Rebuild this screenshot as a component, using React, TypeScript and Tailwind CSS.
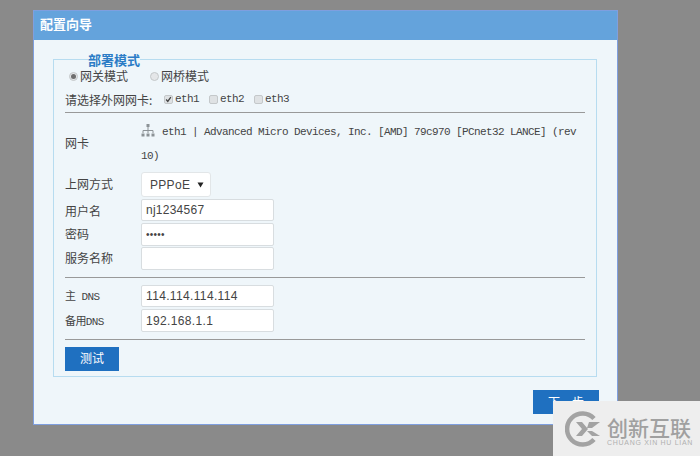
const mono = "font-['Liberation_Mono','Noto_Sans_CJK_SC',monospace] text-[11px] tracking-[-0.6px]";
const inputBase =
  "h-full w-[133px] rounded-[2px] border border-[#d8dde0] bg-white px-[4px] font-['Liberation_Sans',sans-serif] tracking-[0.25px] text-[#444444] outline-none";
const inputClass = `${inputBase} text-[12px]`;

function Radio({ checked }: { checked?: boolean }) {
  return (
    <span className="flex h-[9px] w-[9px] items-center justify-center rounded-full border border-[#c4c8ca] bg-[#e4e6e8]">
      {checked && <span className="h-[5px] w-[5px] rounded-full bg-[#6e6e6e]" />}
    </span>
  );
}

function Check({ label, checked }: { label: string; checked?: boolean }) {
  return (
    <label className="flex items-center gap-[2px]">
      <span className="flex h-[9px] w-[9px] items-center justify-center rounded-[2px] border border-[#c4c8ca] bg-[#dfe2e4]">
        {checked && (
          <svg viewBox="0 0 9 9" className="h-[9px] w-[9px]">
            <path d="M1.5 4.5 L3.6 7 L7.5 1.5" fill="none" stroke="#444444" strokeWidth="1.6" />
          </svg>
        )}
      </span>
      <span className={mono}>{label}</span>
    </label>
  );
}

function Row({ label, height, gap, children }: { label: React.ReactNode; height: string; gap: string; children: React.ReactNode }) {
  return (
    <div className={`flex items-stretch ${height} ${gap}`}>
      <div className="flex w-[76px] items-center">{label}</div>
      {children}
    </div>
  );
}

function NetIcon() {
  return (
    <svg viewBox="0 0 14 13" className="h-[13px] w-[14px]" fill="none">
      <rect x="5.5" y="0" width="3" height="3" fill="#8c9296" />
      <path d="M7 3V9M2 9V6.5H12V9" stroke="#8c9296" />
      <rect x="0.5" y="9.5" width="3" height="3" fill="#8c9296" />
      <rect x="5.5" y="9.5" width="3" height="3" fill="#8c9296" />
      <rect x="10.5" y="9.5" width="3" height="3" fill="#8c9296" />
    </svg>
  );
}

function Watermark() {
  return (
    <div className="absolute bottom-0 right-0 flex h-[55px] w-[147px] items-center gap-[6px] bg-[#eeeeee] pl-[12px]">
      <svg viewBox="0 0 36 36" className="h-[36px] w-[36px]" fill="none">
        <path d="M29 7.5 A15.5 15.5 0 1 0 29 28.5" stroke="#a3a3a3" strokeWidth="4.5" />
        <path d="M11 11 H17 L23 18 L17 25 H11 L17 18 Z" fill="#a3a3a3" />
        <path d="M24 11 H35 L27 17 H22 Z" fill="#a3a3a3" />
        <path d="M22 20 L27 20 L35 25 H27 Z" fill="#a3a3a3" />
      </svg>
      <div className="flex flex-col pt-[5px]">
        <span className="font-['Noto_Sans_CJK_SC',sans-serif] text-[21px] font-medium leading-[23px] text-[#a0a0a0]">创新互联</span>
        <span className="font-['Liberation_Sans',sans-serif] text-[7px] leading-[8px] tracking-[0.7px] text-[#b0b0b0]">CHUANG XIN HU LIAN</span>
      </div>
    </div>
  );
}

export default function App() {
  return (
    <div className="relative h-[456px] w-[700px] overflow-hidden bg-[#8a8a8a] pl-[33px] pt-[10px] font-['Noto_Sans_CJK_SC',sans-serif] text-[12px] text-[#444444]">
      <div className="flex h-[415px] w-[585px] flex-col border border-[#7f9fdf] bg-[#eff6fa]">
        <div className="flex h-[29px] items-center bg-[#64a3dc] pb-[3px] pl-[6px] text-[13px] font-bold text-white">配置向导</div>
        <div className="flex flex-1 flex-col pl-[19px] pr-[18px] pt-[13px]">
          <fieldset className="flex h-[324px] w-[544px] flex-col border border-[#b7dcf0] px-[11px]">
            <legend className="ml-[23px] text-[13px] font-bold leading-[13px] text-[#2b7cc6]">部署模式</legend>
            <div className="flex h-[20px] items-center pl-[4px]">
              <Radio checked />
              <span className="ml-[2px]">网关模式</span>
              <span className="ml-[22px]"><Radio /></span>
              <span className="ml-[2px]">网桥模式</span>
            </div>
            <div className="mt-[2px] flex h-[23px] items-center">
              <span className="w-[99px]">请选择外网网卡:</span>
              <div className="flex items-center gap-[10px]">
                <Check label="eth1" checked />
                <Check label="eth2" />
                <Check label="eth3" />
              </div>
            </div>
            <div className="mt-[1px] h-px bg-[#999999]" />
            <div className="mt-[7px] flex">
              <div className="flex w-[76px] items-center pb-[2px]">网卡</div>
              <div className={`w-[440px] leading-[24px] ${mono}`}>
                <span className="mr-[7px] inline-block align-[-2px]"><NetIcon /></span>
                eth1 | Advanced Micro Devices, Inc. [AMD] 79c970 [PCnet32 LANCE] (rev 10)
              </div>
            </div>
            <Row label={<span className="pb-[2px]">上网方式</span>} height="h-[25px]" gap="mt-[4px]">
              <div className="flex w-[70px] items-center justify-between rounded-[3px] border border-[#e2e6e8] bg-white pl-[8px] pr-[6px] font-['Liberation_Sans',sans-serif] text-[12px] tracking-[0.3px]">
                PPPoE
                <svg viewBox="0 0 8 7" className="h-[6px] w-[7px]"><path d="M0.5 0.5H7.5L4 6.5Z" fill="#222222" /></svg>
              </div>
            </Row>
            <Row label={<span className="pt-[2px]">用户名</span>} height="h-[22px]" gap="mt-[2px]">
              <input className={inputClass} defaultValue="nj1234567" />
            </Row>
            <Row label={<span className="pb-[2px]">密码</span>} height="h-[23px]" gap="mt-[2px]">
              <input type="password" className={`${inputBase} text-[10px]`} defaultValue="12345" />
            </Row>
            <Row label={<span className="pb-[2px]">服务名称</span>} height="h-[23px]" gap="mt-[1px]">
              <input className={inputClass} />
            </Row>
            <div className="mt-[7px] h-px bg-[#999999]" />
            <Row label={<span className={`pt-[3px] ${mono}`}>主 DNS</span>} height="h-[22px]" gap="mt-[7px]">
              <input className={`${inputClass} tracking-[0.35px]`} defaultValue="114.114.114.114" />
            </Row>
            <Row label={<span className={`pt-[3px] ${mono}`}>备用DNS</span>} height="h-[23px]" gap="mt-[2px]">
              <input className={`${inputClass} tracking-[0.35px]`} defaultValue="192.168.1.1" />
            </Row>
            <div className="mt-[7px] h-px bg-[#999999]" />
            <button className="mt-[7px] h-[24px] w-[54px] bg-[#1f70c0] pb-[2px] text-[12px] text-white">测试</button>
          </fieldset>
          <div className="mt-[13px] flex justify-end">
            <button className="h-[24px] w-[66px] bg-[#1f70c0] text-[12px] text-white">下一步</button>
          </div>
        </div>
      </div>
      <Watermark />
    </div>
  );
}
